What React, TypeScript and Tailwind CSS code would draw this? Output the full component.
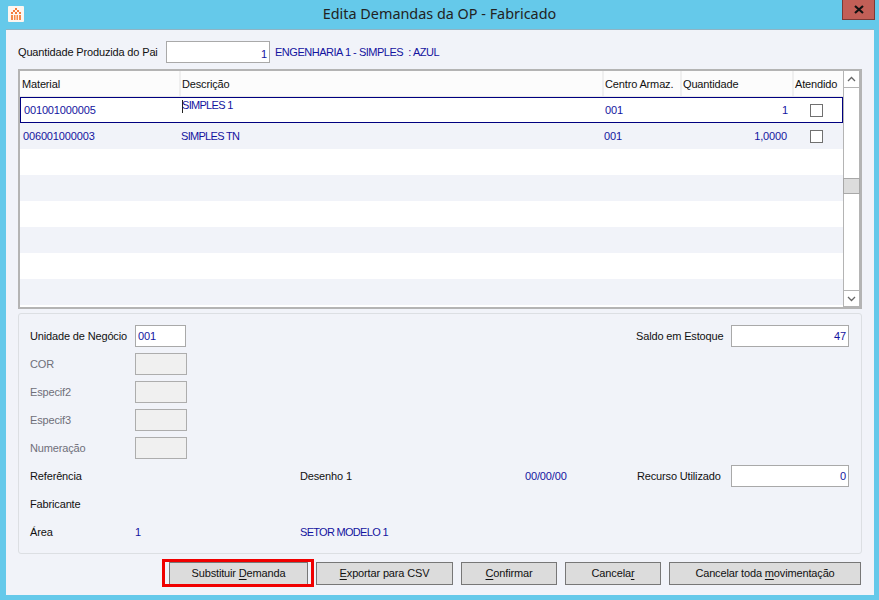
const navy = "text-[#1414a0]";

const Cell = ({ children, className = "" }: { children?: React.ReactNode; className?: string }) => (
  <div className={"flex h-[28px] items-center whitespace-nowrap " + className}>{children}</div>
);

const Field = ({ value, className = "" }: { value: string; className?: string }) => (
  <div className={"flex h-[22px] w-[118px] items-center justify-end border border-[#a9a9a9] bg-white pr-[2px] " + navy + " " + className}>
    {value}
  </div>
);

const Disabled = () => <div className="h-[22px] w-[52px] border border-[#adadad] bg-[#f0f0f0]" />;

const Check = () => <div className="h-[13px] w-[13px] border border-[#707070] bg-white" />;

const Under = ({ children }: { children: React.ReactNode }) => <span className="underline underline-offset-2">{children}</span>;

const rows = [
  { mat: "001001000005", desc: "SIMPLES 1", cen: "001", qty: "1", sel: true },
  { mat: "006001000003", desc: "SIMPLES TN", cen: "001", qty: "1,0000", sel: false },
];

const Header = ({ w, label }: { w: string; label: string }) => (
  <div className={"flex h-full items-center border-r-2 border-[#efefef] pl-[1px] pt-[2px] " + w}>{label}</div>
);

const Button = ({ w, children }: { w: string; children: React.ReactNode }) => (
  <div className={"flex h-[23px] items-center justify-center border border-[#777] bg-[#dcdcdc] text-[#111] " + w}>{children}</div>
);

export default function App() {
  return (
    <div
      className="flex h-[600px] w-[879px] flex-col overflow-hidden bg-[#65c9ea] text-[11px] tracking-[-0.15px] text-[#111]"
      style={{ fontFamily: '"Liberation Sans", sans-serif' }}
    >
      {/* title bar */}
      <div className="grid h-[29px] shrink-0 grid-cols-[1fr_auto_1fr] items-start">
        <div className="pl-[8px] pt-[6px]">
          <svg width="16" height="16" viewBox="0 0 16 16">
            <rect width="16" height="16" rx="1" fill="#fdf6f0" />
            <path d="M7 2h2v2H7zM5 4h2v2H5zM9 4h2v2H9zM3 6h2v2H3zM11 6h2v2h-2zM7 6h2v2H7z" fill="#f47b3a" />
            <path d="M3 9h2v5H3zM6 9h1.5v5H6zM8.5 9H10v5H8.5zM11 9h2v5h-2z" fill="#f58a4a" />
          </svg>
        </div>
        <div className="pt-[4px] text-[14.4px] leading-[20px] tracking-normal text-[#222]" style={{ fontFamily: '"Noto Sans", sans-serif' }}>
          Edita Demandas da OP - Fabricado
        </div>
        <div className="flex justify-end pr-[4px]">
          <div className="flex h-[20px] w-[33px] items-center justify-center border border-[#7a3a36] border-t-0 bg-[#c25f57]">
            <svg width="10" height="9" viewBox="0 0 10 9">
              <path d="M1 1 L9 8 M9 1 L1 8" stroke="#111" strokeWidth="2.2" />
            </svg>
          </div>
        </div>
      </div>

      {/* body */}
      <div className="ml-[6px] mr-[5px] mb-[5px] flex min-h-0 flex-1 flex-col border-t border-[#8fb4c4] bg-[#f1f3f9] pl-[12px] pr-[13px]">
        <div className="mt-[11px] flex h-[22px] items-center">
          <div className="w-[148px] whitespace-nowrap">Quantidade Produzida do Pai</div>
          <div className={"flex h-[22px] w-[104px] items-end justify-end border border-[#a9a9a9] bg-white pr-[2px] " + navy}>1</div>
          <div className={"ml-[5px] whitespace-nowrap tracking-[-0.48px] " + navy}>ENGENHARIA 1 - SIMPLES&nbsp; : AZUL</div>
        </div>

        {/* grid */}
        <div className="mt-[6px] flex h-[240px] w-[844px] shrink-0 border-2 border-[#b4b4b4] bg-white">
          <div className="flex w-[823px] flex-col">
            <div className="flex h-[26px] shrink-0 items-center border-b border-[#e8e8e8] bg-[#fcfcfc]">
              <Header w="w-[161px] pl-[2px]" label="Material" />
              <Header w="w-[423px]" label="Descrição" />
              <Header w="w-[78px]" label="Centro Armaz." />
              <Header w="w-[112px]" label="Quantidade" />
              <div className="pl-[1px] pt-[2px]">Atendido</div>
            </div>
            {rows.map((r) => (
              <div
                key={r.mat}
                className={
                  "relative flex h-[26px] shrink-0 items-center " +
                  navy +
                  " " +
                  (r.sel ? "border border-[#000080] bg-white" : "bg-[#f1f3f9]")
                }
              >
                <div className="w-[160px] pl-[3px]">{r.mat}</div>
                <div className={"w-[423px] pl-[1px] tracking-[-0.7px] " + (r.sel ? "pb-[9px]" : "")}>{r.desc}</div>
                <div className="w-[78px] pl-[1px]">{r.cen}</div>
                <div className="w-[107px] pr-[1px] text-right">{r.qty}</div>
                <div className="flex flex-1 justify-center pl-[2px]">
                  <Check />
                </div>
                {r.sel && <div className="absolute left-[161px] top-[2px] h-[13px] w-px bg-[#222]" />}
              </div>
            ))}
            {[0, 1, 2, 3, 4, 5].map((i) => (
              <div key={i} className={"h-[26px] shrink-0 " + (i % 2 === 1 ? "bg-[#f1f3f9]" : "bg-white")} />
            ))}
          </div>
          {/* scrollbar */}
          <div className="flex w-[17px] flex-col border-x border-[#b4b4b4] bg-white">
            <div className="flex h-[17px] items-center justify-center border-b border-[#b4b4b4]">
              <svg width="9" height="6" viewBox="0 0 9 6">
                <path d="M1 5 L4.5 1.5 L8 5" fill="none" stroke="#666" strokeWidth="1.3" />
              </svg>
            </div>
            <div className="-mx-px mt-[90px] h-[16px] border border-[#a8a8a8] bg-[#dcdcdc]" />
            <div className="mt-auto flex h-[17px] items-center justify-center border-y border-[#b4b4b4]">
              <svg width="9" height="6" viewBox="0 0 9 6">
                <path d="M1 1 L4.5 4.5 L8 1" fill="none" stroke="#666" strokeWidth="1.3" />
              </svg>
            </div>
          </div>
        </div>

        {/* detail group */}
        <div className="mt-[4px] h-[241px] w-[844px] shrink-0 rounded-[3px] border border-[#dcdfe3] py-[8px] pl-[11px]">
          <div className="grid grid-cols-[105px_165px_225px_111px_95px_118px] grid-rows-[repeat(8,28px)]">
            <Cell>Unidade de Negócio</Cell>
            <Cell className="col-span-3">
              <div className={"flex h-[22px] w-[51px] items-center border border-[#a9a9a9] bg-white pl-[2px] " + navy}>001</div>
            </Cell>
            <Cell>Saldo em Estoque</Cell>
            <Cell><Field value="47" /></Cell>

            <Cell className="text-[#6f6f7a]">COR</Cell>
            <Cell className="col-span-5"><Disabled /></Cell>
            <Cell className="text-[#6f6f7a]">Especif2</Cell>
            <Cell className="col-span-5"><Disabled /></Cell>
            <Cell className="text-[#6f6f7a]">Especif3</Cell>
            <Cell className="col-span-5"><Disabled /></Cell>
            <Cell className="text-[#6f6f7a]">Numeração</Cell>
            <Cell className="col-span-5"><Disabled /></Cell>

            <Cell>Referência</Cell>
            <Cell />
            <Cell>Desenho 1</Cell>
            <Cell className={navy}>00/00/00</Cell>
            <Cell className="pl-[1px]">Recurso Utilizado</Cell>
            <Cell><Field value="0" /></Cell>

            <Cell className="col-span-6">Fabricante</Cell>

            <Cell>Área</Cell>
            <Cell className={navy}>1</Cell>
            <Cell className={"col-span-4 tracking-[-0.7px] " + navy}>SETOR MODELO 1</Cell>
          </div>
        </div>

        {/* buttons */}
        <div className="mt-[8px] flex justify-end gap-[8px]">
          <div className="relative">
            <Button w="w-[139px]">
              <span>Substituir <Under>D</Under>emanda</span>
            </Button>
            <div className="absolute -top-[3px] -right-[6px] -bottom-[2px] -left-[7px] border-[3px] border-[#f00000]" />
          </div>
          <Button w="w-[137px]"><span><Under>E</Under>xportar para CSV</span></Button>
          <Button w="w-[96px]"><span><Under>C</Under>onfirmar</span></Button>
          <Button w="w-[96px]"><span>Cancela<Under>r</Under></span></Button>
          <Button w="w-[192px]"><span>Cancelar toda <Under>m</Under>ovimentação</span></Button>
        </div>
      </div>
    </div>
  );
}
